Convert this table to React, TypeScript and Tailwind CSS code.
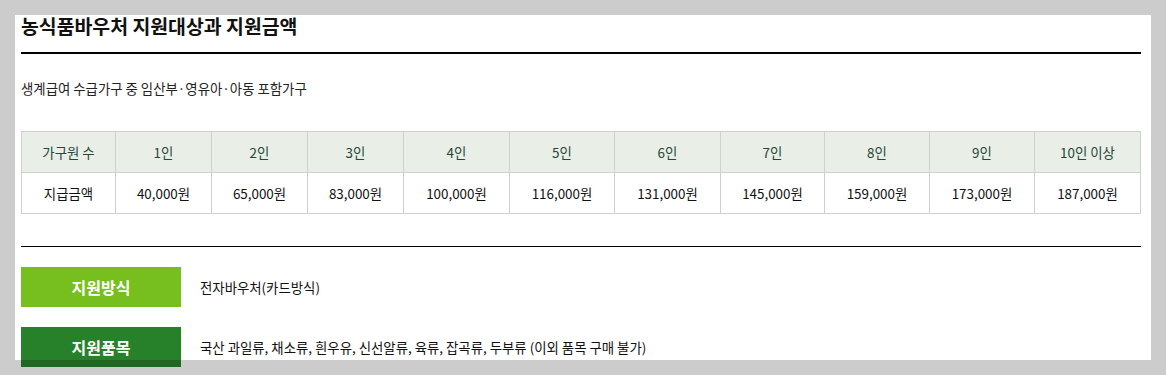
import React from 'react';

const font = { fontFamily: '"Noto Sans CJK KR", "Noto Sans", sans-serif' };

const sizes = ['가구원 수', '1인', '2인', '3인', '4인', '5인', '6인', '7인', '8인', '9인', '10인 이상'];
const amounts = ['지급금액', '40,000원', '65,000원', '83,000원', '100,000원', '116,000원', '131,000원', '145,000원', '159,000원', '173,000원', '187,000원'];
const colWidths = ['w-[94px]', 'w-[96px]', 'w-[96px]', 'w-[96px]', 'w-[106px]', 'w-[105px]', 'w-[106px]', 'w-[104px]', 'w-[105px]', 'w-[105px]', 'w-[106px]'];

const InfoRow = ({ label, color, text }: { label: string; color: string; text: string }) => (
  <div className="flex items-center">
    <div className={`w-[160px] h-[40px] flex items-center justify-center text-white font-bold text-[16px] ${color}`}>
      {label}
    </div>
    <p className="ml-[19px] text-[13.4px] text-[#111]">{text}</p>
  </div>
);

export default function App() {
  return (
    <div className="relative w-full h-[375px] overflow-hidden bg-white" style={font}>
      <div className="pl-[21px] pr-[25px]">
        <h2 className="pt-[14px] text-[19.4px] leading-[24px] font-bold text-[#111]">농식품바우처 지원대상과 지원금액</h2>
        <div className="mt-[14px] h-[2px] bg-black" />

        <p className="mt-[24px] text-[13.4px] leading-[20px] text-[#222]">생계급여 수급가구 중 임산부·영유아·아동 포함가구</p>

        <table className="mt-[33px] w-[1120px] border-collapse table-fixed text-[13.4px]">
          <colgroup>
            {colWidths.map((w, i) => (
              <col key={i} className={w} />
            ))}
          </colgroup>
          <tbody>
            <tr className="h-[41px] bg-[#e9eee6]">
              {sizes.map((s) => (
                <td key={s} className="border border-[#d0d0d0] text-center text-[#24473a]">{s}</td>
              ))}
            </tr>
            <tr className="h-[41px] bg-white">
              {amounts.map((a) => (
                <td key={a} className="border border-[#d0d0d0] text-center text-[#111]">{a}</td>
              ))}
            </tr>
          </tbody>
        </table>

        <div className="mt-[32px] h-px bg-black" />

        <div className="mt-[20px] flex flex-col gap-[20px]">
          <InfoRow label="지원방식" color="bg-[#76bf1e]" text="전자바우처(카드방식)" />
          <InfoRow label="지원품목" color="bg-[#27812b]" text="국산 과일류, 채소류, 흰우유, 신선알류, 육류, 잡곡류, 두부류 (이외 품목 구매 불가)" />
        </div>
      </div>

      <div className="pointer-events-none absolute inset-0 border-[15px] border-black/20" />
    </div>
  );
}
